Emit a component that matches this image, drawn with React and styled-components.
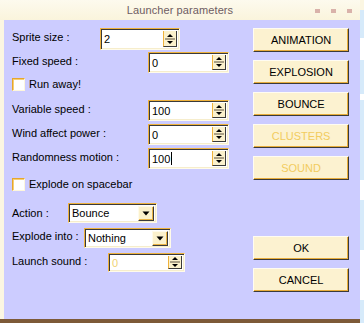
import React from "react";
import styled, { createGlobalStyle } from "styled-components";

const GlobalStyle = createGlobalStyle`
  html, body {
    margin: 0;
    padding: 0;
    background: #d6eafa;
  }
  body {
    font-family: "Liberation Sans", Arial, sans-serif;
    font-size: 11px;
    color: #000;
  }
`;

export default function App() {
  return (
    <Page>
      <GlobalStyle />
      <Window>
        <TitleBar>
          <Title>Launcher parameters</Title>
          <TitleButtons>
            <TitleDot />
            <TitleDot />
            <TitleDot />
          </TitleButtons>
        </TitleBar>
        <Client>
          <LeftColumn>
            <Row $top={0} $height={22}>
              <Label $width={88} $pad={3}>Sprite size :</Label>
              <SpinBox value="2" $width={80} />
            </Row>
            <Row $top={2} $height={21}>
              <Label $width={136} $pad={3}>Fixed speed :</Label>
              <SpinBox value="0" $width={81} />
            </Row>
            <Row $top={5} $height={13}>
              <CheckBox />
              <CheckLabel>Run away!</CheckLabel>
            </Row>
            <Row $top={9} $height={21}>
              <Label $width={136} $pad={3}>Variable speed :</Label>
              <SpinBox value="100" $width={81} />
            </Row>
            <Row $top={3} $height={21}>
              <Label $width={136} $pad={3}>Wind affect power :</Label>
              <SpinBox value="0" $width={81} />
            </Row>
            <Row $top={3} $height={21}>
              <Label $width={136} $pad={3}>Randomness motion :</Label>
              <SpinBox value="100" $width={81} caret />
            </Row>
            <Row $top={9} $height={13}>
              <CheckBox />
              <CheckLabel>Explode on spacebar</CheckLabel>
            </Row>
            <Row $top={12} $height={20}>
              <Label $width={56} $pad={4}>Action :</Label>
              <Select value="Bounce" $width={89} />
            </Row>
            <Row $top={5} $height={20}>
              <Label $width={72} $pad={2}>Explode into :</Label>
              <Select value="Nothing" $width={87} />
            </Row>
            <Row $top={5} $height={19}>
              <Label $width={96} $pad={2}>Launch sound :</Label>
              <SpinBox value="0" $width={77} disabled />
            </Row>
          </LeftColumn>
          <RightColumn>
            <Button>ANIMATION</Button>
            <Button>EXPLOSION</Button>
            <Button>BOUNCE</Button>
            <Button $disabled>CLUSTERS</Button>
            <Button $disabled>SOUND</Button>
            <Button $top={48}>OK</Button>
            <Button>CANCEL</Button>
          </RightColumn>
        </Client>
        <BottomEdge />
      </Window>
      <Backdrop />
    </Page>
  );
}

function SpinBox({ value, caret, disabled, ...rest }) {
  return (
    <Field {...rest}>
      <FieldText $disabled={disabled}>
        {value}
        {caret && <Caret />}
      </FieldText>
      <SpinButton>
        <svg width="12" height="14" viewBox="0 0 12 14">
          <path d="M3 5 L6 2 L9 5 Z" fill="#000" />
          <line x1="1" y1="7" x2="11" y2="7" stroke="#5a5040" strokeWidth="1" />
          <path d="M3 9 L9 9 L6 12 Z" fill="#000" />
        </svg>
      </SpinButton>
    </Field>
  );
}

function Select({ value, ...rest }) {
  return (
    <Field {...rest}>
      <FieldText>{value}</FieldText>
      <DropButton>
        <svg width="8" height="5" viewBox="0 0 8 5">
          <path d="M0.5 0.5 L7.5 0.5 L4 4.5 Z" fill="#000" />
        </svg>
      </DropButton>
    </Field>
  );
}

const Page = styled.div`
  width: 364px;
  height: 323px;
  display: flex;
  overflow: hidden;
`;

const Window = styled.div`
  width: 360px;
  height: 323px;
  display: flex;
  flex-direction: column;
  background: #fbf6e2;
`;

const Backdrop = styled.div`
  flex: 1;
  background: linear-gradient(
    to bottom,
    #fbf6e2 0px,
    #fbf6e2 10px,
    #d6eafa 10px,
    #d6eafa 38px,
    #ffffff 38px,
    #ffffff 60px,
    #d6eafa 60px,
    #d6eafa 94px,
    #ffffff 94px,
    #ffffff 100px,
    #d6eafa 100px,
    #d6eafa 180px,
    #ffffff 180px,
    #ffffff 200px,
    #d6eafa 200px,
    #d6eafa 250px,
    #ffffff 250px,
    #ffffff 300px,
    #d6eafa 300px
  );
`;

const TitleBar = styled.div`
  height: 20px;
  display: flex;
  align-items: center;
  justify-content: center;
  position: relative;
  background: linear-gradient(to bottom, #fdfaee, #faf4dc);
`;

const Title = styled.span`
  color: #6e5c62;
  font-size: 11px;
  letter-spacing: 0.1px;
`;

const TitleButtons = styled.div`
  position: absolute;
  right: 8px;
  top: 9px;
  display: flex;
  gap: 11px;
`;

const TitleDot = styled.span`
  width: 5px;
  height: 4px;
  background: #d9b2aa;
`;

const Client = styled.div`
  flex: 1;
  margin-left: 4px;
  background: #ccccff;
  display: flex;
  padding: 8px 11px 0 8px;
`;

const LeftColumn = styled.div`
  width: 240px;
  display: flex;
  flex-direction: column;
`;

const Row = styled.div`
  display: flex;
  align-items: flex-start;
  height: ${(p) => p.$height}px;
  margin-top: ${(p) => p.$top}px;
`;

const Label = styled.span`
  width: ${(p) => p.$width}px;
  flex-shrink: 0;
  padding-top: ${(p) => p.$pad}px;
  line-height: 13px;
  white-space: nowrap;
`;

const CheckBox = styled.span`
  width: 13px;
  height: 13px;
  box-sizing: border-box;
  background: #fff;
  border-top: 1px solid #e6a62c;
  border-left: 1px solid #e6a62c;
  border-right: 1px solid #fdf6dc;
  border-bottom: 1px solid #fdf6dc;
  box-shadow: inset 1px 1px 0 #f6cf74;
`;

const CheckLabel = styled.span`
  margin-left: 4px;
  line-height: 13px;
`;

const Field = styled.div`
  width: ${(p) => p.$width}px;
  height: 100%;
  box-sizing: border-box;
  background: #fff;
  border-top: 1px solid #efb23c;
  border-left: 1px solid #efb23c;
  border-right: 1px solid #fffbea;
  border-bottom: 1px solid #fffbea;
  box-shadow: inset 1px 1px 0 #3a3a3a, inset -1px -1px 0 #f6edcc;
  display: flex;
  align-items: center;
  padding: 2px 2px 2px 3px;
`;

const FieldText = styled.span`
  flex: 1;
  display: flex;
  align-items: center;
  font-size: 11px;
  color: ${(p) => (p.$disabled ? "#f0d272" : "#000")};
`;

const Caret = styled.span`
  width: 1px;
  height: 13px;
  margin-left: 1px;
  background: #000;
`;

const SpinButton = styled.span`
  width: 14px;
  height: 100%;
  box-sizing: border-box;
  background: #fbf1cc;
  border-left: 1px solid #efb23c;
  border-right: 1px solid #3a3a3a;
  border-bottom: 1px solid #3a3a3a;
  display: flex;
  align-items: center;
  justify-content: center;
`;

const DropButton = styled.span`
  width: 16px;
  height: 15px;
  box-sizing: border-box;
  background: #fbf1cc;
  border-top: 1px solid #fffbea;
  border-left: 1px solid #fffbea;
  border-right: 1px solid #3a3a3a;
  border-bottom: 1px solid #3a3a3a;
  box-shadow: inset -1px -1px 0 #e9b345;
  display: flex;
  align-items: center;
  justify-content: center;
`;

const RightColumn = styled.div`
  width: 97px;
  display: flex;
  flex-direction: column;
  gap: 8px;
  margin-left: 4px;
`;

const Button = styled.div`
  height: 24px;
  margin-top: ${(p) => p.$top || 0}px;
  box-sizing: border-box;
  background: #fcf2d0;
  border-top: 1px solid #fffcf2;
  border-left: 1px solid #fffcf2;
  border-right: 1px solid #3a3a3a;
  border-bottom: 1px solid #3a3a3a;
  box-shadow: inset -1px -1px 0 #e7ad3c;
  display: flex;
  align-items: center;
  justify-content: center;
  font-size: 11px;
  color: ${(p) => (p.$disabled ? "#f2cc5e" : "#000")};
`;

const BottomEdge = styled.div`
  height: 4px;
  background: #7d5a38;
`;
